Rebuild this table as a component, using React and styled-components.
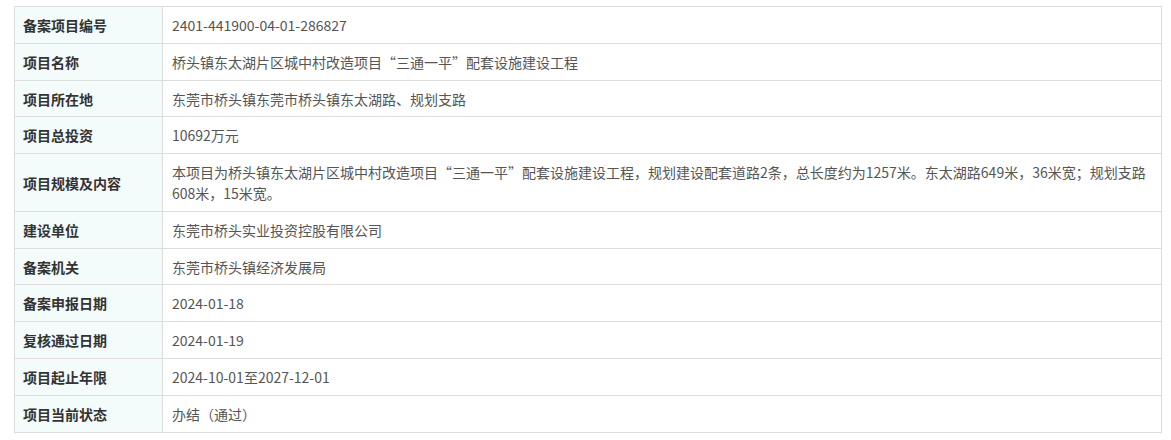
import React from "react";
import styled, { createGlobalStyle } from "styled-components";

const Global = createGlobalStyle`
  body {
    margin: 0;
    background: #fff;
    font-family: "Noto Sans CJK SC", "Noto Sans", sans-serif;
  }
`;

const Wrap = styled.div`
  padding: 6px 9px 0 14px;
`;

const Table = styled.table`
  width: 100%;
  border-collapse: separate;
  border-spacing: 0;
  border-top: 1px solid #dddddd;
  border-left: 1px solid #dddddd;
  font-size: 14px;
  line-height: 20.8px;
`;

const Label = styled.th`
  width: 129px;
  padding: 8px 10px 7px 8px;
  border-right: 1px solid #dddddd;
  border-bottom: 1px solid #dddddd;
  background: #f3fbfb;
  color: #333;
  font-weight: bold;
  text-align: left;
  vertical-align: middle;
`;

const Value = styled.td`
  padding: 8px 10px 7px 9px;
  border-right: 1px solid #dddddd;
  border-bottom: 1px solid #dddddd;
  color: #555;
  text-align: left;
  vertical-align: middle;
`;

const rows = [
  ["备案项目编号", "2401-441900-04-01-286827"],
  ["项目名称", "桥头镇东太湖片区城中村改造项目“三通一平”配套设施建设工程"],
  ["项目所在地", "东莞市桥头镇东莞市桥头镇东太湖路、规划支路"],
  ["项目总投资", "10692万元"],
  [
    "项目规模及内容",
    "本项目为桥头镇东太湖片区城中村改造项目“三通一平”配套设施建设工程，规划建设配套道路2条，总长度约为1257米。东太湖路649米，36米宽；规划支路608米，15米宽。",
  ],
  ["建设单位", "东莞市桥头实业投资控股有限公司"],
  ["备案机关", "东莞市桥头镇经济发展局"],
  ["备案申报日期", "2024-01-18"],
  ["复核通过日期", "2024-01-19"],
  ["项目起止年限", "2024-10-01至2027-12-01"],
  ["项目当前状态", "办结（通过）"],
];

export default function App() {
  return (
    <Wrap>
      <Global />
      <Table>
        <tbody>
          {rows.map(([k, v]) => (
            <tr key={k}>
              <Label>{k}</Label>
              <Value>{v}</Value>
            </tr>
          ))}
        </tbody>
      </Table>
    </Wrap>
  );
}
